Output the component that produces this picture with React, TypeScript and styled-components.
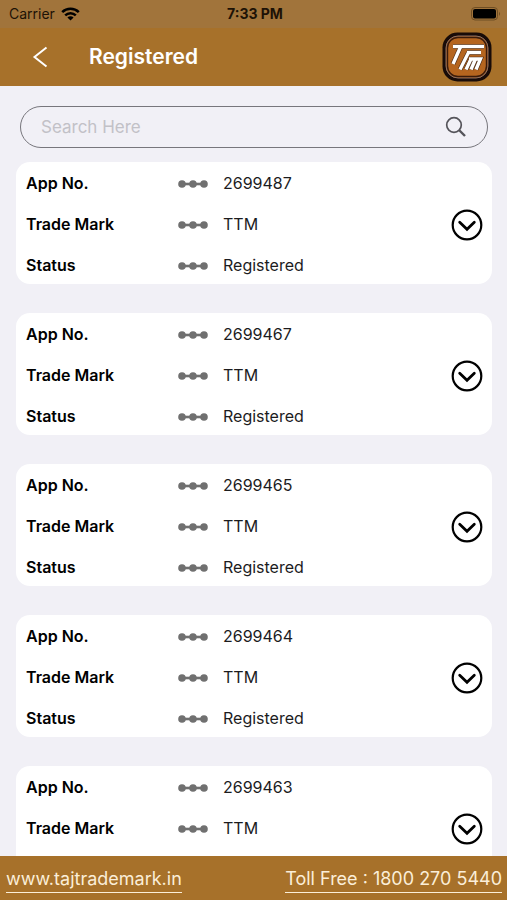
import React, { useState } from "react";
import styled, { createGlobalStyle } from "styled-components";

const GlobalStyle = createGlobalStyle`
  *, *::before, *::after { box-sizing: border-box; }
  body {
    margin: 0;
    background: #f1f0f6;
    color: #1c1c1e;
    font-family: Inter, "Liberation Sans", sans-serif;
  }
`;

const Screen = styled.div`
  display: flex;
  flex-direction: column;
  height: 100vh;
`;

const StatusBar = styled.div`
  display: grid;
  grid-template-columns: 1fr auto 1fr;
  align-items: center;
  flex: none;
  height: 28px;
  padding: 0 6px 0 9px;
  background: #a1743b;
  color: #1d1206;
  font-size: 14px;
  line-height: 20px;
`;

const Carrier = styled.span`
  display: flex;
  align-items: center;
  gap: 6px;
`;

const Clock = styled.time`
  font-weight: 700;
`;

const BatteryIcon = styled.svg`
  justify-self: end;
`;

const Header = styled.header`
  display: flex;
  align-items: center;
  flex: none;
  height: 58px;
  padding: 0 15px 0 26px;
  background: #a7712a;
  color: #fff;
`;

const IconButton = styled.button`
  display: flex;
  align-items: center;
  justify-content: center;
  flex: none;
  padding: 0;
  border: 0;
  background: none;
  color: inherit;
  cursor: pointer;
`;

const BackButton = styled(IconButton)`
  width: 28px;
  height: 32px;
`;

const Title = styled.h1`
  flex: 1;
  margin: 0 0 0 35px;
  font-size: 21px;
  line-height: 28px;
  font-weight: 600;
`;

const Main = styled.main`
  flex: 1;
  min-height: 0;
  display: flex;
  flex-direction: column;
`;

const SearchBox = styled.form`
  display: flex;
  align-items: center;
  flex: none;
  height: 42px;
  margin: 20px 19px 14px 20px;
  padding: 0 20px;
  border: 1px solid #77767c;
  border-radius: 21px;
`;

const SearchInput = styled.input`
  flex: 1;
  min-width: 0;
  padding: 0;
  border: 0;
  outline: 0;
  background: none;
  color: inherit;
  font: inherit;
  font-size: 17px;
  line-height: 24px;
  &::placeholder { color: #c2c1c7; opacity: 1; }
`;

const CardList = styled.div`
  flex: 1;
  min-height: 0;
  display: flex;
  flex-direction: column;
  gap: 29px;
  padding: 0 15px 0 16px;
  overflow-y: auto;
  scrollbar-width: none;
`;

const Card = styled.article`
  display: flex;
  align-items: center;
  flex: none;
  padding: 11px 9px 8px 10px;
  border-radius: 14px;
  background: #fff;
`;

const Fields = styled.dl`
  flex: 1;
  display: flex;
  flex-direction: column;
  gap: 20px;
  margin: 0;
`;

const Field = styled.div`
  display: grid;
  grid-template-columns: 152px 45px 1fr;
  align-items: center;
  font-size: 16px;
  line-height: 21px;
`;

const Label = styled.dt`
  color: #000;
  font-weight: 600;
`;

const Value = styled.dd`
  grid-column: 3;
  margin: 0;
`;

const Footer = styled.footer`
  display: flex;
  align-items: center;
  justify-content: space-between;
  flex: none;
  height: 44px;
  padding: 2px 5px 0 6px;
  background: #a7712a;
`;

const FooterLink = styled.a`
  border-bottom: 1px solid #fbeed8;
  color: #fbeed8;
  font-size: 18px;
  line-height: 27px;
  text-decoration: none;
`;

function Wifi() {
  return (
    <svg width="19" height="14" viewBox="0 0 19 14" fill="none" stroke="#000" strokeWidth="2.5" aria-hidden="true">
      <path d="M1.2 5.2a11.8 11.8 0 0 1 16.6 0" />
      <path d="M4.2 8.4a7.5 7.5 0 0 1 10.6 0" />
      <path d="M9.5 13.6 6.4 10.5a4.4 4.4 0 0 1 6.2 0z" fill="#000" stroke="none" />
    </svg>
  );
}

function Battery() {
  return (
    <BatteryIcon width="30" height="14" viewBox="0 0 30 14" aria-hidden="true">
      <rect x="0.5" y="0.5" width="26" height="12.5" rx="3.5" fill="none" stroke="#6f4e24" />
      <rect x="2" y="2" width="23" height="9.5" rx="2" fill="#000" />
      <path d="M28 4.7a2.5 2.5 0 0 1 0 4z" fill="#6f4e24" />
    </BatteryIcon>
  );
}

function LogoStrokes() {
  return (
    <>
      <path d="M11 14.5H42" />
      <path d="M25 20.5H39" />
      <path d="M18.5 15 11 32" />
      <path d="M26.5 20.5 18 37.5" />
      <path d="M29 27 24 37.5" />
      <path d="M27 27H38.5L34 37.5" />
      <path d="M33.5 27 29 37.5" />
    </>
  );
}

function Logo() {
  return (
    <svg width="50" height="50" viewBox="0 0 50 50" role="img" aria-label="Taj Trademark">
      <rect x="0.5" y="0.5" width="49" height="49" rx="15" fill="#180b08" />
      <rect x="4" y="4" width="42" height="42" rx="12" fill="#b5651f" stroke="#8a7065" strokeWidth="1" />
      <rect x="5.5" y="5.5" width="39" height="39" rx="10.5" fill="none" stroke="#3a1b0b" strokeWidth="1.4" />
      <g fill="none" stroke="#4a2a14" strokeWidth="4.6">
        <LogoStrokes />
      </g>
      <g fill="none" stroke="#fff" strokeWidth="3.4">
        <LogoStrokes />
      </g>
    </svg>
  );
}

function Connector() {
  return (
    <svg width="30" height="8" viewBox="0 0 30 8" fill="#707070" aria-hidden="true">
      <path d="M4 2.7h22v2.6H4z" />
      <circle cx="4" cy="4" r="3.8" />
      <circle cx="15" cy="4" r="3.8" />
      <circle cx="26" cy="4" r="3.8" />
    </svg>
  );
}

const applications = ["2699487", "2699467", "2699465", "2699464", "2699463"];

function ApplicationCard({ appNo }: { appNo: string }) {
  const fields = [
    ["App No.", appNo],
    ["Trade Mark", "TTM"],
    ["Status", "Registered"],
  ];
  return (
    <Card>
      <Fields>
        {fields.map(([label, value]) => (
          <Field key={label}>
            <Label>{label}</Label>
            <Connector />
            <Value>{value}</Value>
          </Field>
        ))}
      </Fields>
      <IconButton type="button" aria-label={`Show details of ${appNo}`}>
        <svg width="32" height="32" viewBox="0 0 32 32" fill="none" stroke="#000" aria-hidden="true">
          <circle cx="16" cy="16" r="14.3" strokeWidth="2.2" />
          <path d="M8.7 13.3 16 20.3 23.3 13.3" strokeWidth="2.8" strokeLinecap="round" />
        </svg>
      </IconButton>
    </Card>
  );
}

export default function App() {
  const [query, setQuery] = useState("");
  return (
    <Screen>
      <GlobalStyle />
      <StatusBar>
        <Carrier>Carrier <Wifi /></Carrier>
        <Clock>7:33 PM</Clock>
        <Battery />
      </StatusBar>
      <Header>
        <BackButton type="button" aria-label="Back">
          <svg width="16" height="22" viewBox="0 0 16 22" fill="none" stroke="currentColor" strokeWidth="2" aria-hidden="true">
            <path d="M14.5 1.5 2.5 11 14.5 20.5" />
          </svg>
        </BackButton>
        <Title>Registered</Title>
        <Logo />
      </Header>
      <Main>
        <SearchBox role="search" onSubmit={(e) => e.preventDefault()}>
          <SearchInput
            type="text"
            aria-label="Search"
            placeholder="Search Here"
            value={query}
            onChange={(e) => setQuery(e.target.value)}
          />
          <IconButton type="submit" aria-label="Search">
            <svg width="22" height="22" viewBox="0 0 22 22" fill="none" stroke="#55545a" aria-hidden="true">
              <circle cx="9" cy="9" r="7.3" strokeWidth="1.7" />
              <path d="M14 14 20 20" strokeWidth="2.4" />
            </svg>
          </IconButton>
        </SearchBox>
        <CardList>
          {applications
            .filter((appNo) => appNo.includes(query.trim()))
            .map((appNo) => (
              <ApplicationCard key={appNo} appNo={appNo} />
            ))}
        </CardList>
      </Main>
      <Footer>
        <FooterLink href="#website">www.tajtrademark.in</FooterLink>
        <FooterLink href="tel:18002705440">Toll Free : 1800 270 5440</FooterLink>
      </Footer>
    </Screen>
  );
}
